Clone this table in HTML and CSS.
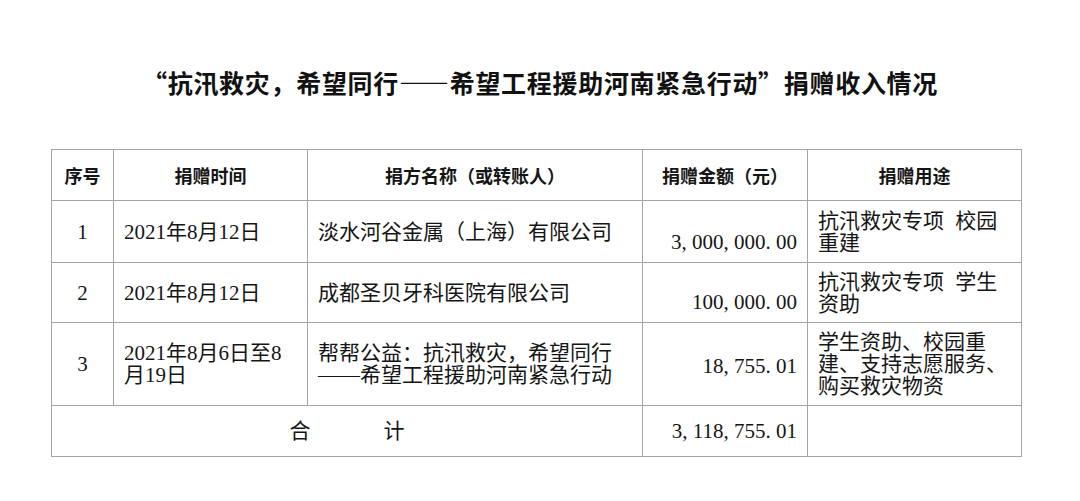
FILE: index.html
```html
<!DOCTYPE html>
<html lang="zh-CN">
<head>
<meta charset="utf-8">
<title>捐赠收入情况</title>
<link rel="stylesheet" href="styles.css">
</head>
<body>
<div class="page">
  <h1 class="title">“抗汛救灾，希望同行——希望工程援助河南紧急行动”捐赠收入情况</h1>
  <table class="donations">
    <colgroup>
      <col class="c-seq">
      <col class="c-date">
      <col class="c-name">
      <col class="c-amt">
      <col class="c-use">
    </colgroup>
    <thead>
      <tr class="r-head">
        <th>序号</th>
        <th>捐赠时间</th>
        <th>捐方名称（或转账人）</th>
        <th>捐赠金额（元）</th>
        <th>捐赠用途</th>
      </tr>
    </thead>
    <tbody>
      <tr class="r-1">
        <td class="seq">1</td>
        <td class="txt">2021年8月12日</td>
        <td class="txt">淡水河谷金属（上海）有限公司</td>
        <td class="amt amt-low">3, 000, 000. 00</td>
        <td class="txt use">抗汛救灾专项 校园<br>重建</td>
      </tr>
      <tr class="r-2">
        <td class="seq">2</td>
        <td class="txt">2021年8月12日</td>
        <td class="txt">成都圣贝牙科医院有限公司</td>
        <td class="amt amt-low">100, 000. 00</td>
        <td class="txt use">抗汛救灾专项 学生<br>资助</td>
      </tr>
      <tr class="r-3">
        <td class="seq">3</td>
        <td class="txt">2021年8月6日至8<br>月19日</td>
        <td class="txt">帮帮公益：抗汛救灾，希望同行<br>——希望工程援助河南紧急行动</td>
        <td class="amt amt-mid">18, 755. 01</td>
        <td class="txt use">学生资助、校园重<br>建、支持志愿服务、<br>购买救灾物资</td>
      </tr>
      <tr class="r-sum">
        <td class="sum" colspan="3"><span class="sum-a">合</span><span class="sum-b">计</span></td>
        <td class="amt">3, 118, 755. 01</td>
        <td class="txt"></td>
      </tr>
    </tbody>
  </table>
</div>
</body>
</html>
```

FILE: styles.css
```css
html, body {
  margin: 0;
  padding: 0;
  background: #ffffff;
}

body {
  color: #151515;
  font-family: "Liberation Serif", "Noto Sans CJK SC", serif;
}

.page {
  width: 1080px;
  height: 501px;
  overflow: hidden;
}

.title {
  margin: 0;
  padding-top: 64px;
  font-family: "Noto Sans CJK SC", sans-serif;
  font-size: 25px;
  line-height: 36px;
  font-weight: 700;
  text-align: center;
  letter-spacing: 0.7px;
  color: #111111;
}

.donations {
  margin: 49px 0 0 51px;
  width: 970px;
  border-collapse: collapse;
  table-layout: fixed;
}

.c-seq { width: 62px; }
.c-date { width: 194px; }
.c-name { width: 335px; }
.c-amt { width: 165px; }
.c-use { width: 214px; }

.donations th,
.donations td {
  border: 1px solid #a4a4a4;
  padding: 0 10px;
  vertical-align: middle;
}

.donations th {
  font-family: "Noto Sans CJK SC", sans-serif;
  font-size: 18px;
  font-weight: 700;
  line-height: 22px;
  text-align: center;
  color: #151515;
}

.donations td {
  font-size: 21px;
  line-height: 22px;
  font-weight: 400;
}

.r-head { height: 51px; }
.r-1 { height: 62px; }
.r-2 { height: 60px; }
.r-3 { height: 83px; }
.r-sum { height: 51px; }

.donations .seq {
  text-align: center;
}

.donations .txt {
  text-align: left;
}

.donations .use {
  word-spacing: 6px;
}

.donations .amt {
  text-align: right;
  white-space: nowrap;
}

.donations td.amt-low {
  vertical-align: bottom;
  padding-bottom: 9px;
}

.donations td.amt-mid {
  padding-top: 4px;
}

.donations .sum {
  text-align: center;
}

.sum-a {
  margin-right: 73px;
}
```
